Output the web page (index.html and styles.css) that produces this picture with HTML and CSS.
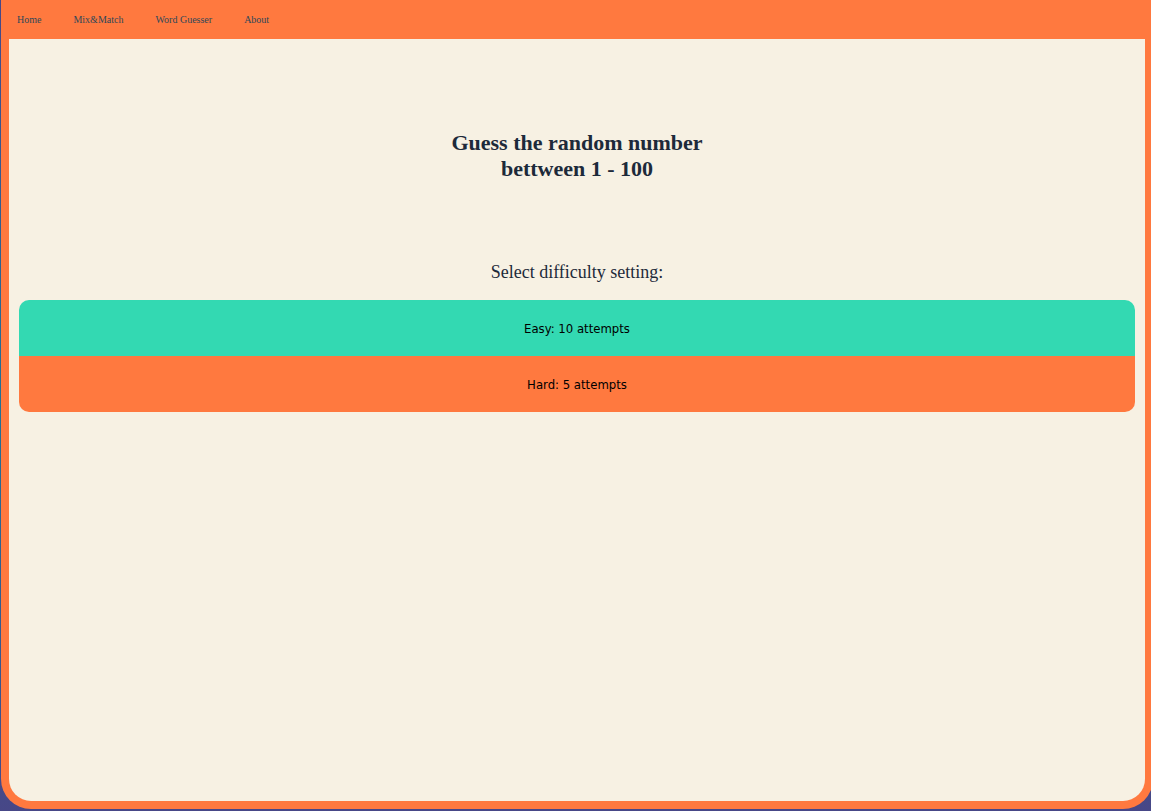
FILE: index.html
```html
<!DOCTYPE html>
<html lang="en">
<head>
  <meta charset="utf-8">
  <meta name="viewport" content="width=device-width, initial-scale=1">
  <title>Number Guesser</title>
  <link rel="stylesheet" href="styles.css">
</head>
<body>
  <div class="frame">
    <nav class="nav">
      <a class="nav-link" href="#">Home</a>
      <a class="nav-link" href="#">Mix&amp;Match</a>
      <a class="nav-link" href="#">Word Guesser</a>
      <a class="nav-link" href="#">About</a>
    </nav>
    <main class="game">
      <h1 class="title">Guess the random number<br>bettween 1 - 100</h1>
      <p class="prompt">Select difficulty setting:</p>
      <div class="levels">
        <button class="level level-easy" type="button">Easy: 10 attempts</button>
        <button class="level level-hard" type="button">Hard: 5 attempts</button>
      </div>
    </main>
  </div>
</body>
</html>
```

FILE: styles.css
```css
* {
  box-sizing: border-box;
}

body {
  display: flex;
  min-height: 100vh;
  margin: 0;
  padding: 0 0 2px 1px;
  overflow: hidden;
  background: linear-gradient(#474787, #227093 50%, #474787);
  color: #1d2a3a;
  font-family: "Times New Roman", "Liberation Serif", serif;
}

.frame {
  display: flex;
  flex: 1;
  flex-direction: column;
  margin-right: -2px;
  padding: 0 8px 8px;
  border-radius: 0 0 30px 30px;
  background: #ff793f;
}

.nav {
  display: flex;
  gap: 32px;
  padding: 14px 8px 13px;
}

.nav-link {
  color: #2f4858;
  font-size: 10px;
  line-height: 12px;
  text-decoration: none;
}

.game {
  flex: 1;
  padding: 91px 10px 0;
  border-radius: 0 0 22px 22px;
  background: #f7f1e3;
  text-align: center;
}

.title {
  margin: 0 0 80px;
  font-size: 22px;
  line-height: 26px;
}

.prompt {
  margin: 0 0 18px;
  font-size: 18px;
  line-height: 20px;
}

.levels {
  display: flex;
  flex-direction: column;
  overflow: hidden;
  border-radius: 10px;
}

.level {
  height: 56px;
  border: 0;
  color: #000;
  font-family: Tahoma, "DejaVu Sans Condensed", "DejaVu Sans", sans-serif;
  font-size: 13px;
  cursor: pointer;
}

.level-easy {
  background: #33d9b2;
}

.level-hard {
  background: #ff793f;
}
```
